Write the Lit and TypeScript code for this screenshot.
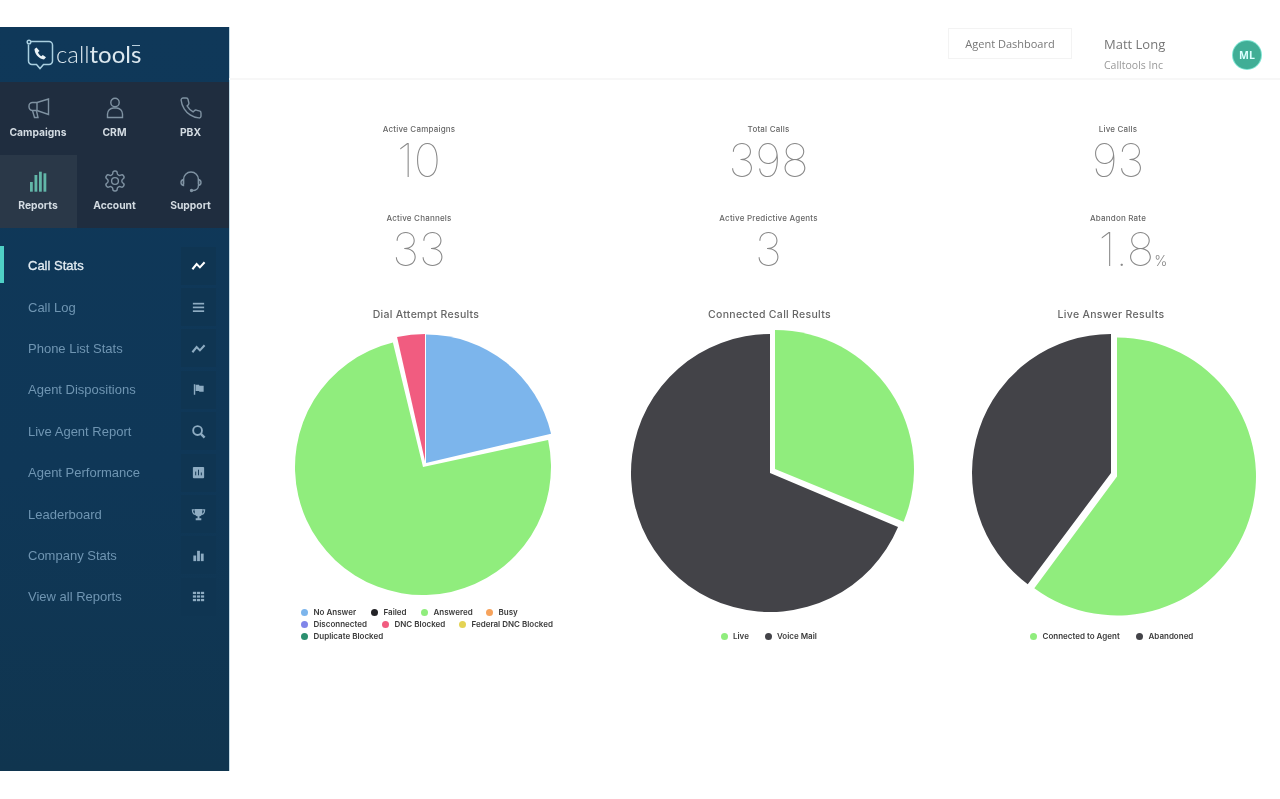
import { LitElement, html, css, svg } from 'lit'
import { customElement } from 'lit/decorators.js'

type Slice = { cx: number; cy: number; r: number; from: number; to: number; color: string }

const GREEN = '#90ed7d'
const DARK = '#434348'
const BLUE = '#7cb5ec'
const PINK = '#f15c80'

// angles are degrees clockwise from 12 o'clock
function slicePath(s: Slice) {
    const pt = (a: number) => {
        const rad = (a * Math.PI) / 180
        return `${(s.cx + s.r * Math.sin(rad)).toFixed(2)} ${(s.cy - s.r * Math.cos(rad)).toFixed(2)}`
    }
    const large = s.to - s.from > 180 ? 1 : 0
    return `M${s.cx} ${s.cy}L${pt(s.from)}A${s.r} ${s.r} 0 ${large} 1 ${pt(s.to)}Z`
}

const charts = [
    {
        title: 'Dial Attempt Results',
        titleShift: 7,
        slices: [
            { cx: 157, cy: 138, r: 128.5, from: 0, to: 76.8, color: BLUE },
            { cx: 154, cy: 142, r: 128, from: 77.8, to: 346.4, color: GREEN },
            { cx: 156, cy: 136, r: 127, from: 347.3, to: 360, color: PINK },
        ],
        legendClass: 'legend left',
        legend: [
            [['No Answer', BLUE, 70], ['Failed', '#222226', 50], ['Answered', GREEN, 65], ['Busy', '#f7a35c', 0]],
            [['Disconnected', '#8085e9', 81], ['DNC Blocked', PINK, 77], ['Federal DNC Blocked', '#e4d354', 0]],
            [['Duplicate Blocked', '#2b8f6f', 0]],
        ],
    },
    {
        title: 'Connected Call Results',
        titleShift: 1,
        slices: [
            { cx: 151, cy: 148, r: 139, from: 112.9, to: 360, color: DARK },
            { cx: 156, cy: 144, r: 139, from: 0, to: 112.3, color: GREEN },
        ],
        legendClass: 'legend mid',
        legend: [[['Live', GREEN, 44], ['Voice Mail', DARK, 0]]],
    },
    {
        title: 'Live Answer Results',
        titleShift: -7,
        slices: [
            { cx: 143, cy: 148, r: 139, from: 216.8, to: 360, color: DARK },
            { cx: 149, cy: 151.5, r: 139, from: 0, to: 216.5, color: GREEN },
        ],
        legendClass: 'legend end',
        legend: [[['Connected to Agent', GREEN, 106], ['Abandoned', DARK, 0]]],
    },
]

const stats = [
    { label: 'Active Campaigns', value: '10' },
    { label: 'Total Calls', value: '398' },
    { label: 'Live Calls', value: '93' },
    { label: 'Active Channels', value: '33' },
    { label: 'Active Predictive Agents', value: '3' },
    { label: 'Abandon Rate', value: '1.8', unit: '%' },
]

const navIcons = {
    campaigns: svg`<path d="M21.5 3v15.5L10 14.5H5.5a3.5 3.5 0 0 1-3.5-3.5V10a3.5 3.5 0 0 1 3.5-3.5H10z"/><path d="M10 6.5v8"/><path d="M5.5 14.5 7.5 21.5h3.5L9.5 15"/>`,
    crm: svg`<circle cx="12" cy="6.5" r="4.2"/><path d="M4.5 21.5v-3.5a6 6 0 0 1 6-6h3a6 6 0 0 1 6 6v3.5z"/>`,
    pbx: svg`<path d="M22 16.92v3a2 2 0 0 1-2.18 2 19.79 19.79 0 0 1-8.63-3.07 19.5 19.5 0 0 1-6-6 19.79 19.79 0 0 1-3.07-8.67A2 2 0 0 1 4.11 2h3a2 2 0 0 1 2 1.72 12.84 12.84 0 0 0 .7 2.81 2 2 0 0 1-.45 2.11L8.09 9.91a16 16 0 0 0 6 6l1.27-1.27a2 2 0 0 1 2.11-.45 12.84 12.84 0 0 0 2.81.7A2 2 0 0 1 22 16.92z"/>`,
    reports: svg`<g fill="currentColor" stroke="none"><rect x="3" y="13" width="2.8" height="9.7"/><rect x="7.5" y="6" width="2.8" height="16.7"/><rect x="12" y="2.7" width="2.8" height="20"/><rect x="16.5" y="4.3" width="2.8" height="18.4"/></g>`,
    account: svg`<path d="M12.22 2h-.44a2 2 0 0 0-2 2v.18a2 2 0 0 1-1 1.73l-.43.25a2 2 0 0 1-2 0l-.15-.08a2 2 0 0 0-2.73.73l-.22.38a2 2 0 0 0 .73 2.73l.15.1a2 2 0 0 1 1 1.72v.51a2 2 0 0 1-1 1.74l-.15.09a2 2 0 0 0-.73 2.73l.22.38a2 2 0 0 0 2.73.73l.15-.08a2 2 0 0 1 2 0l.43.25a2 2 0 0 1 1 1.73V20a2 2 0 0 0 2 2h.44a2 2 0 0 0 2-2v-.18a2 2 0 0 1 1-1.73l.43-.25a2 2 0 0 1 2 0l.15.08a2 2 0 0 0 2.73-.73l.22-.39a2 2 0 0 0-.73-2.73l-.15-.08a2 2 0 0 1-1-1.74v-.5a2 2 0 0 1 1-1.74l.15-.09a2 2 0 0 0 .73-2.73l-.22-.38a2 2 0 0 0-2.73-.73l-.15.08a2 2 0 0 1-2 0l-.43-.25a2 2 0 0 1-1-1.73V4a2 2 0 0 0-2-2z"/><circle cx="12" cy="12" r="3.4"/>`,
    support: svg`<path d="M4.5 15v-4.5a7.5 7.5 0 0 1 15 0V15"/><path d="M4.5 10.5a3 3 0 0 0-2.5 3v0a3 3 0 0 0 2.5 3z"/><path d="M19.5 10.5a3 3 0 0 1 2.5 3v0a3 3 0 0 1-2.5 3z"/><path d="M19.5 16.5c0 3-2.5 5-6 5"/><circle cx="12.5" cy="21.5" r="1" fill="currentColor"/>`,
}

const navItems = [
    { label: 'Campaigns', icon: navIcons.campaigns },
    { label: 'CRM', icon: navIcons.crm },
    { label: 'PBX', icon: navIcons.pbx },
    { label: 'Reports', icon: navIcons.reports, active: true },
    { label: 'Account', icon: navIcons.account },
    { label: 'Support', icon: navIcons.support },
]

const trend = svg`<path d="M1.5 12 6 6.5l3.5 3.5 5-5.5" fill="none" stroke="currentColor" stroke-width="2.2"/>`

const menuItems = [
    { label: 'Call Stats', active: true, icon: trend },
    { label: 'Call Log', icon: svg`<g fill="currentColor"><rect x="2" y="3" width="12" height="1.8"/><rect x="2" y="7" width="12" height="1.8"/><rect x="2" y="11" width="12" height="1.8"/></g>` },
    { label: 'Phone List Stats', icon: trend },
    { label: 'Agent Dispositions', icon: svg`<path d="M3 2.5h1.5v11H3zM5 3h3.5l.5 1h4.5v6.5H9l-.5-1H5z" fill="currentColor"/>` },
    { label: 'Live Agent Report', icon: svg`<circle cx="7" cy="7" r="4.7" fill="none" stroke="currentColor" stroke-width="2"/><path d="m10.5 10.5 4 4" stroke="currentColor" stroke-width="2.6"/>` },
    { label: 'Agent Performance', icon: svg`<rect x="2" y="2" width="12" height="12" rx="1" fill="currentColor"/><path d="M5 11V7M8 11V5M11 11V8" stroke="#0f3350" stroke-width="1"/>` },
    { label: 'Leaderboard', icon: svg`<path d="M4 2h8v4a4 4 0 0 1-8 0zM7 9.5h2V12h2v2H5v-2h2z" fill="currentColor"/><path d="M4 3H1.5c0 3 1 4.5 3 5M12 3h2.5c0 3-1 4.5-3 5" fill="none" stroke="currentColor" stroke-width="1.3"/>` },
    { label: 'Company Stats', icon: svg`<g fill="currentColor"><rect x="2.5" y="8" width="3" height="6"/><rect x="6.5" y="3" width="3" height="11"/><rect x="10.5" y="6" width="3" height="8"/></g>` },
    { label: 'View all Reports', icon: svg`<g fill="currentColor"><rect x="2" y="3" width="3.4" height="2.4"/><rect x="6.3" y="3" width="3.4" height="2.4"/><rect x="10.6" y="3" width="3.4" height="2.4"/><rect x="2" y="6.8" width="3.4" height="2.4"/><rect x="6.3" y="6.8" width="3.4" height="2.4"/><rect x="10.6" y="6.8" width="3.4" height="2.4"/><rect x="2" y="10.6" width="3.4" height="2.4"/><rect x="6.3" y="10.6" width="3.4" height="2.4"/><rect x="10.6" y="10.6" width="3.4" height="2.4"/></g>` },
]

@customElement('app-root')
class AppRoot extends LitElement {
    static styles = css`
        :host {
            display: block;
            height: 799px;
            overflow: hidden;
            background: #fff;
        }

        .page {
            display: grid;
            grid-template-columns: 229px 1fr;
            padding-top: 27px;
        }

        .sidebar {
            height: 744px;
            background: linear-gradient(180deg, #0f3859 0%, #0f3757 60%, #10354f 100%);
            font-family: 'Liberation Sans', Arial, sans-serif;
            box-shadow: 1px 0 0 #c5dbe6;
        }

        .logo {
            height: 55px;
            display: flex;
            align-items: center;
            padding-left: 26px;
            gap: 1px;
            color: #dce8ef;
        }

        .logo svg {
            width: 29px;
            height: 31px;
        }

        .wordmark {
            font: 300 24px 'Lato', sans-serif;
            position: relative;
            top: -1px;
            filter: blur(0.3px);
        }

        .wordmark b {
            font-weight: 400;
        }

        .wordmark::after {
            content: '';
            position: absolute;
            right: 1px;
            top: 6px;
            width: 8px;
            height: 1px;
            background: #b9cfdc;
        }

        .nav {
            display: grid;
            grid-template-columns: 77px 76px 76px;
            grid-auto-rows: 73px;
            background: #1f2d3f;
        }

        .nav-cell {
            display: flex;
            flex-direction: column;
            align-items: center;
            padding-top: 14px;
            box-sizing: border-box;
            color: #7f92a2;
        }

        .nav-cell.active {
            background: #2a3848;
            color: #62b6a8;
        }

        .nav-cell svg {
            width: 24px;
            height: 24px;
            fill: none;
            stroke: currentColor;
            stroke-width: 1.4;
            filter: blur(0.3px);
        }

        .nav-cell span {
            margin-top: 6px;
            margin-right: 1px;
            font: 700 10.3px 'Inter', sans-serif;
            color: #d3dbe2;
            filter: blur(0.35px);
        }

        .menu {
            display: grid;
            grid-auto-rows: 41.4px;
            padding-top: 17px;
        }

        .menu-row {
            position: relative;
            display: flex;
            align-items: center;
            justify-content: space-between;
            padding: 0 13px 0 28px;
            font-size: 13px;
            color: #6f95b2;
        }

        .menu-row.active {
            color: #e4edf3;
            -webkit-text-stroke: 0.3px #e4edf3;
        }

        .menu-row.active::before {
            content: '';
            position: absolute;
            left: 0;
            top: 1px;
            width: 4px;
            height: 37px;
            background: #4fd0c6;
        }

        .menu-row span {
            filter: blur(0.35px);
        }

        .menu-icon {
            width: 35px;
            height: 38px;
            display: flex;
            align-items: center;
            justify-content: center;
            background: #0f3552;
            color: #8eacc2;
        }

        .menu-row.active .menu-icon {
            color: #fff;
        }

        .menu-icon svg {
            width: 15px;
            height: 15px;
            filter: blur(0.3px);
        }

        .main {
            min-width: 0;
        }

        .topbar {
            height: 53px;
            display: flex;
            justify-content: flex-end;
            align-items: flex-start;
            box-sizing: border-box;
            padding-right: 19px;
            border-bottom: 2px solid #f7f7f7;
            font-family: 'Open Sans', sans-serif;
        }

        .dash-btn {
            margin-top: 1px;
            width: 124px;
            height: 31px;
            box-sizing: border-box;
            border: 1px solid #f3f3f3;
            display: flex;
            align-items: center;
            justify-content: center;
            font-size: 11px;
            color: #777;
            filter: blur(0.35px);
        }

        .user {
            margin-left: 32px;
            width: 129px;
            padding-top: 8px;
            filter: blur(0.35px);
        }

        .user-name {
            font-size: 13px;
            line-height: 18px;
            color: #777;
        }

        .user-org {
            margin-top: 4px;
            font-size: 10.5px;
            line-height: 16px;
            color: #999;
        }

        .avatar {
            margin-top: 14px;
            width: 28px;
            height: 28px;
            border-radius: 50%;
            background: #40ae96;
            box-shadow: 0 0 0 1px #7fe6d4;
            display: flex;
            align-items: center;
            justify-content: center;
            font: 700 10.5px 'Open Sans', sans-serif;
            color: #dff;
            filter: blur(0.3px);
        }

        .columns {
            display: grid;
            grid-template-columns: repeat(3, 300px);
            column-gap: 49.5px;
            padding-left: 40px;
        }

        .stats {
            margin-top: 43px;
            grid-auto-rows: 88.5px;
        }

        .stat {
            text-align: center;
        }

        .stat-label {
            font: 500 8px/12px 'Inter', sans-serif;
            letter-spacing: 0.2px;
            color: #666;
            filter: blur(0.35px);
        }

        .stat-value {
            font: 100 46px/50px 'Inter', sans-serif;
            color: #888;
            filter: blur(0.3px);
        }

        .stat-value.has-unit {
            padding-left: 30px;
        }

        .stat-unit {
            font-size: 14px;
            font-weight: 300;
        }

        .chart-title {
            margin-top: 8px;
            height: 14px;
            text-align: center;
            font: 500 10.5px/14px 'Inter', sans-serif;
            letter-spacing: 0.3px;
            color: #666;
            filter: blur(0.35px);
        }

        .pie {
            display: block;
            margin-top: 3px;
            overflow: visible;
            filter: blur(0.4px);
        }

        .legend {
            height: 36px;
            display: flex;
            flex-direction: column;
            justify-content: flex-end;
            font: 600 8px/12px 'Inter', sans-serif;
            color: #3a3a3a;
        }

        .legend.left {
            padding-left: 32px;
        }

        .legend.mid {
            padding-left: 102px;
        }

        .legend.end {
            padding-left: 62px;
        }

        .legend-row {
            display: flex;
            height: 12px;
        }

        .legend-item {
            display: flex;
            align-items: center;
            gap: 5.5px;
            white-space: nowrap;
            filter: blur(0.35px);
        }

        .dot {
            width: 7px;
            height: 7px;
            border-radius: 50%;
            flex: none;
        }
    `

    renderLogo() {
        return html`
            <svg viewBox="0 0 29 31" fill="none" stroke="#a9cfe0" stroke-width="1.5">
                <circle cx="3" cy="3" r="1.8"/>
                <path d="M5 2.5h18a3.5 3.5 0 0 1 3.5 3.5v16a3.5 3.5 0 0 1-3.5 3.5h-5.5L14 29.5l-3.5-4H6A3.5 3.5 0 0 1 2.5 22V5.5"/>
                <path d="M10.5 8.5 8.5 10c0 5 4 9.5 9.5 10.500l2-2.200-3.200-2.300-1.500 1.200c-1.500-.9-2.800-2.400-3.300-4l1.500-1.200z" fill="#eaf3f7" stroke="none"/>
            </svg>
            <span class="wordmark">call<b>tools</b></span>
        `
    }

    render() {
        return html`
            <div class="page">
                <aside class="sidebar">
                    <div class="logo">${this.renderLogo()}</div>
                    <div class="nav">
                        ${navItems.map(n => html`
                            <div class="nav-cell ${n.active ? 'active' : ''}">
                                <svg viewBox="0 0 24 24">${n.icon}</svg>
                                <span>${n.label}</span>
                            </div>
                        `)}
                    </div>
                    <div class="menu">
                        ${menuItems.map(m => html`
                            <div class="menu-row ${m.active ? 'active' : ''}">
                                <span>${m.label}</span>
                                <div class="menu-icon"><svg viewBox="0 0 16 16">${m.icon}</svg></div>
                            </div>
                        `)}
                    </div>
                </aside>
                <main class="main">
                    <header class="topbar">
                        <div class="dash-btn">Agent Dashboard</div>
                        <div class="user">
                            <div class="user-name">Matt Long</div>
                            <div class="user-org">Calltools Inc</div>
                        </div>
                        <div class="avatar">ML</div>
                    </header>
                    <section class="columns stats">
                        ${stats.map(s => html`
                            <div class="stat">
                                <div class="stat-label">${s.label}</div>
                                <div class="stat-value ${s.unit ? 'has-unit' : ''}">${s.value}${s.unit ? html`<span class="stat-unit">${s.unit}</span>` : ''}</div>
                            </div>
                        `)}
                    </section>
                    <section class="columns">
                        ${charts.map(c => html`
                            <div>
                                <div class="chart-title" style="transform: translateX(${c.titleShift}px)">${c.title}</div>
                                <svg class="pie" width="300" height="281" viewBox="0 0 300 281">
                                    ${c.slices.map(s => svg`<path d=${slicePath(s)} fill=${s.color}/>`)}
                                </svg>
                                <div class=${c.legendClass}>
                                    ${c.legend.map(row => html`
                                        <div class="legend-row">
                                            ${row.map(([label, color, width]) => html`
                                                <div class="legend-item" style=${width ? `width: ${width}px` : ''}>
                                                    <i class="dot" style="background: ${color}"></i>${label}
                                                </div>
                                            `)}
                                        </div>
                                    `)}
                                </div>
                            </div>
                        `)}
                    </section>
                </main>
            </div>
        `
    }
}
